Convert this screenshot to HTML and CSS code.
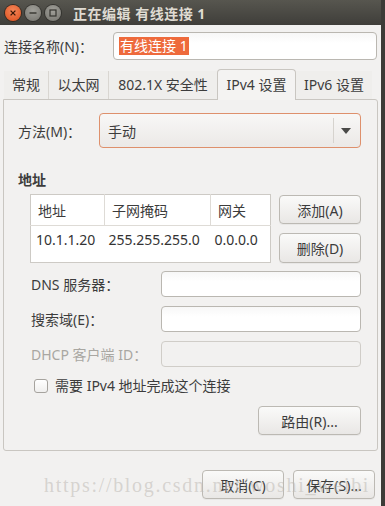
FILE: index.html
```html
<!DOCTYPE html>
<html lang="zh-CN">
<head>
    <meta charset="UTF-8">
    <title>正在编辑 有线连接 1</title>
    <link rel="stylesheet" href="styles.css">
</head>
<body>
    <div class="window">
        <div class="titlebar">
            <span class="wbtn close"><svg width="16" height="16" viewBox="0 0 16 16"><path d="M5.6 5.6 L10.4 10.4 M10.4 5.6 L5.6 10.4" stroke="#3a1808" stroke-width="1.3"/></svg></span>
            <span class="wbtn min"><svg width="16" height="16" viewBox="0 0 16 16"><path d="M4.5 8 H11.5" stroke="#35342f" stroke-width="1.4"/></svg></span>
            <span class="wbtn max"><svg width="16" height="16" viewBox="0 0 16 16"><rect x="5" y="5" width="6" height="6" fill="none" stroke="#35342f" stroke-width="1.2"/></svg></span>
            <span class="title">正在编辑 有线连接 1</span>
        </div>

        <div class="name-row">
            <label>连接名称(N)<span class="colon">：</span></label>
            <div class="entry name-entry"><span class="selected">有线连接 1</span></div>
        </div>

        <div class="notebook">
            <div class="tabs">
                <div class="tab t1">常规</div>
                <div class="tab t2">以太网</div>
                <div class="tab t3">802.1X 安全性</div>
                <div class="tab active">IPv4 设置</div>
                <div class="tab t5">IPv6 设置</div>
            </div>
            <div class="panel">
                <div class="method-row">
                    <label>方法(M)<span class="colon">：</span></label>
                    <div class="combo">
                        <span class="combo-text">手动</span>
                        <span class="combo-sep"></span>
                        <svg class="combo-arrow" width="10" height="6" viewBox="0 0 10 6"><path d="M0 0 H10 L5 6 Z" fill="#4a4a48"/></svg>
                    </div>
                </div>

                <div class="section-title">地址</div>

                <div class="address">
                    <table class="addr-table">
                        <tr class="head">
                            <th class="c1">地址</th>
                            <th class="c2">子网掩码</th>
                            <th class="c3">网关</th>
                        </tr>
                        <tr class="data">
                            <td>10.1.1.20</td>
                            <td>255.255.255.0</td>
                            <td>0.0.0.0</td>
                        </tr>
                    </table>
                    <div class="addr-buttons">
                        <button class="btn add">添加(A)</button>
                        <button class="btn del">删除(D)</button>
                    </div>
                </div>

                <div class="fields">
                    <div class="field">
                        <label>DNS 服务器<span class="colon">：</span></label>
                        <div class="entry small"></div>
                    </div>
                    <div class="field">
                        <label>搜索域(E)<span class="colon">：</span></label>
                        <div class="entry small"></div>
                    </div>
                    <div class="field">
                        <label class="disabled">DHCP 客户端 ID<span class="colon">：</span></label>
                        <div class="entry small off"></div>
                    </div>
                </div>

                <div class="check-row">
                    <span class="checkbox"></span>
                    <span>需要 IPv4 地址完成这个连接</span>
                </div>

                <div class="route-row">
                    <button class="btn route">路由(R)...</button>
                </div>
            </div>
        </div>

        <div class="actions">
            <button class="btn action">取消(C)</button>
            <button class="btn action">保存(S)...</button>
        </div>

        <div class="watermark">https://blog.csdn.net/woshi_weibi</div>
    </div>
</body>
</html>
```

FILE: styles.css
```css
body {
    margin: 0;
    background-color: #3c3b37;
    font-family: "Noto Sans", "Noto Sans CJK SC", sans-serif;
    font-size: 14px;
    color: #3c3c3c;
}

.window {
    position: relative;
    width: 381px;
    height: 506px;
    background-color: #f2f1f0;
    overflow: hidden;
}

.titlebar {
    height: 25px;
    background: linear-gradient(#57564f, #3f3e3a);
    display: flex;
    align-items: center;
    padding-left: 5px;
}

.wbtn {
    width: 16px;
    height: 16px;
    border-radius: 50%;
    margin-right: 4px;
    display: flex;
}

.wbtn.close {
    background: radial-gradient(circle at 50% 35%, #f58659, #de4f1c);
    box-shadow: 0 0 0 1px #3a2a20;
}

.wbtn.min, .wbtn.max {
    background: radial-gradient(circle at 50% 35%, #a09f99, #75746e);
    box-shadow: 0 0 0 1px #34332f;
}

.wbtn.max {
    margin-right: 0;
}

.title {
    margin-left: 12px;
    color: #dfdbd2;
    font-weight: bold;
    font-size: 14px;
    letter-spacing: 0.5px;
}

.colon {
    font-family: "Noto Sans CJK TC", sans-serif;
}

.name-row {
    display: flex;
    align-items: center;
    margin-top: 7px;
    padding-left: 4px;
}

.entry {
    box-sizing: border-box;
    border: 1px solid #bab7b1;
    border-radius: 4px;
    background: linear-gradient(#f7f7f7, #ffffff 40%);
}

.name-entry {
    margin-left: auto;
    margin-right: 4px;
    width: 264px;
    height: 28px;
    display: flex;
    align-items: center;
    padding-left: 5px;
}

.selected {
    background-color: #ee6a3c;
    color: #ffffff;
    line-height: 18px;
    padding: 0 1px;
}

.notebook {
    margin-top: 9px;
}

.tabs {
    display: flex;
    align-items: flex-end;
    height: 30px;
    padding-left: 4px;
}

.tab {
    height: 28px;
    line-height: 28px;
    text-align: center;
    box-sizing: border-box;
    border-left: 1px solid #d9d6d1;
    background-color: #efeeec;
    color: #3c3c3c;
}

.tab.t1 { width: 44px; border-left: none; }
.tab.t2 { width: 60px; }
.tab.t3 { width: 109px; }
.tab.t5 { width: 76px; border-left: none; }

.tab.active {
    width: 79px;
    height: 31px;
    line-height: 30px;
    border: 1px solid #c9c6c1;
    border-bottom: none;
    border-radius: 4px 4px 0 0;
    background-color: #f4f3f2;
    margin-bottom: -1px;
    position: relative;
}

.panel {
    margin: 0 3px;
    border: 1px solid #c9c6c1;
    border-radius: 0 3px 3px 3px;
    padding: 13px 16px 15px 14px;
    background-color: #f2f1f0;
}

.method-row {
    display: flex;
    align-items: center;
}

.combo {
    margin-left: auto;
    width: 262px;
    height: 35px;
    box-sizing: border-box;
    border: 1px solid #de906c;
    border-radius: 4px;
    background: linear-gradient(#f8f7f6, #ebe9e7);
    display: flex;
    align-items: center;
    padding-left: 8px;
}

.combo-sep {
    margin-left: auto;
    width: 1px;
    height: 25px;
    background-color: #d6d3ce;
}

.combo-arrow {
    margin: 0 9px 0 7px;
}

.section-title {
    margin-top: 22px;
    font-weight: bold;
    line-height: 20px;
}

.address {
    display: flex;
    margin-top: 4px;
    padding-left: 12px;
}

.addr-table {
    width: 241px;
    height: 69px;
    border-collapse: collapse;
    border: 1px solid #cdcac5;
    background-color: #ffffff;
    font-size: 14px;
}

.addr-table th {
    font-weight: normal;
    text-align: left;
    height: 30px;
    padding: 0 0 0 7px;
    border-bottom: 1px solid #dedbd6;
    border-right: 1px solid #dedbd6;
}

.addr-table th.c1 { width: 66px; }
.addr-table th.c2 { width: 98px; }
.addr-table th.c3 { border-right: none; }

.addr-table td {
    vertical-align: top;
    padding: 4px 0 0 4px;
    line-height: 20px;
    color: #333333;
}

.addr-table td:first-child {
    padding-left: 5px;
}

.addr-buttons {
    margin-left: 8px;
    display: flex;
    flex-direction: column;
    gap: 9px;
    padding-top: 1px;
}

.btn {
    font-family: "Noto Sans", "Noto Sans CJK SC", sans-serif;
    font-size: 14px;
    color: #3c3c3c;
    box-sizing: border-box;
    border: 1px solid #bcb9b3;
    border-radius: 4px;
    background: linear-gradient(#fafaf9, #e9e7e5);
    box-shadow: 0 1px 0 rgba(0, 0, 0, 0.04);
    padding: 0;
}

.btn.add { width: 82px; height: 29px; }
.btn.del { width: 82px; height: 30px; }

.fields {
    margin-top: 8px;
    display: flex;
    flex-direction: column;
    gap: 9px;
}

.field {
    display: flex;
    align-items: center;
    padding-left: 13px;
}

.field .disabled {
    color: #a9a7a2;
}

.entry.small {
    margin-left: auto;
    width: 200px;
    height: 26px;
}

.entry.off {
    background: #f2f1f0;
    border-color: #d0cdc8;
}

.check-row {
    display: flex;
    align-items: center;
    margin-top: 12px;
    padding-left: 16px;
    line-height: 14px;
}

.checkbox {
    width: 14px;
    height: 14px;
    box-sizing: border-box;
    border: 1px solid #a6a39e;
    border-radius: 3px;
    background: linear-gradient(#ffffff, #f0efee);
    margin-right: 7px;
}

.route-row {
    display: flex;
    justify-content: flex-end;
    margin-top: 13px;
}

.btn.route {
    width: 103px;
    height: 29px;
}

.actions {
    display: flex;
    justify-content: flex-end;
    gap: 9px;
    margin-top: 19px;
    padding-right: 6px;
}

.btn.action {
    width: 82px;
    height: 29px;
}

.watermark {
    position: absolute;
    left: 44px;
    top: 474px;
    font-family: "Liberation Serif", serif;
    font-size: 20px;
    letter-spacing: 1.7px;
    color: rgba(190, 186, 180, 0.55);
    pointer-events: none;
    white-space: nowrap;
}
```
